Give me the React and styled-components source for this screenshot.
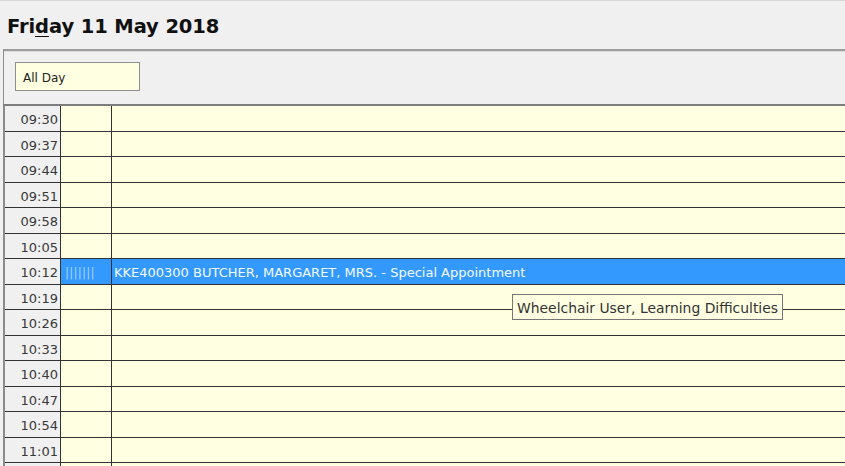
import React from "react";
import styled, { createGlobalStyle } from "styled-components";

const GlobalStyle = createGlobalStyle`
  html, body { margin: 0; padding: 0; background: #f0f0f0; }
  body { font-family: "DejaVu Sans", "Noto Sans", sans-serif; }
`;

const Page = styled.div`
  width: 845px;
  height: 466px;
  overflow: hidden;
  background: #f0f0f0;
  display: flex;
  flex-direction: column;
`;

const Header = styled.div`
  height: 49px;
  box-sizing: border-box;
  border-top: 1px solid #d6d6d6;
  padding: 14px 0 0 7px;
  flex: none;
`;

const Title = styled.h1`
  margin: 0;
  font-family: "DejaVu Sans", sans-serif;
  font-weight: bold;
  font-size: 19.5px;
  line-height: 24px;
  color: #111;
  letter-spacing: -0.1px;
  u { text-decoration-thickness: 1px; text-underline-offset: 3px; }
`;

const AllDayPanel = styled.div`
  margin-left: 3px;
  height: 55px;
  box-sizing: border-box;
  border-top: 2px solid #9d9d9d;
  border-left: 1px solid #8c8c8c;
  box-shadow: inset 0 1px 0 #dcdcdc;
  padding: 11px 0 0 11px;
  flex: none;
`;

const AllDayBox = styled.div`
  width: 125px;
  height: 29px;
  box-sizing: border-box;
  border: 1px solid #8f8f8f;
  background: #ffffe1;
  padding: 2px 0 0 7px;
  display: flex;
  align-items: center;
  font-size: 12px;
  color: #222;
`;

const Grid = styled.div`
  position: relative;
  margin-left: 3px;
  border-top: 2px solid #7d7d7d;
  border-left: 2px solid #8c8c8c;
  background: #ffffe1;
  flex: 1;
`;

const Row = styled.div`
  display: grid;
  grid-template-columns: 56px 51px 1fr;
  height: 25.5px;
  box-sizing: border-box;
  border-bottom: 1px solid #333;
  background: ${(p) => (p.$selected ? "#3399ff" : "#ffffe1")};
`;

const TimeCell = styled.div`
  background: #f0f0f0;
  border-right: 1px solid #333;
  display: flex;
  align-items: center;
  justify-content: flex-end;
  padding: 3px 2px 0 0;
  font-size: 13px;
  color: #383838;
`;

const MarkCell = styled.div`
  border-right: 1px solid #333;
  display: flex;
  align-items: center;
  padding: 3px 0 0 4px;
  font-size: 12px;
  color: #a9d1fb;
  letter-spacing: 0.2px;
  overflow: hidden;
  white-space: nowrap;
`;

const TextCell = styled.div`
  display: flex;
  align-items: center;
  padding: 3px 0 0 2px;
  font-size: 13px;
  color: #f4f9ff;
  white-space: nowrap;
  overflow: hidden;
`;

const Tooltip = styled.div`
  position: absolute;
  left: 507px;
  top: 188px;
  width: 271px;
  height: 26px;
  box-sizing: border-box;
  border: 1px solid #767676;
  background: #ffffe1;
  display: flex;
  align-items: center;
  padding: 1px 0 0 4px;
  font-size: 13.9px;
  color: #333;
  white-space: nowrap;
`;

const times = [
  "09:30", "09:37", "09:44", "09:51", "09:58", "10:05", "10:12",
  "10:19", "10:26", "10:33", "10:40", "10:47", "10:54", "11:01", "",
];

export default function App() {
  return (
    <Page>
      <GlobalStyle />
      <Header>
        <Title>
          Fri<u>d</u>ay 11 May 2018
        </Title>
      </Header>
      <AllDayPanel>
        <AllDayBox>All Day</AllDayBox>
      </AllDayPanel>
      <Grid>
        {times.map((t, i) => {
          const sel = t === "10:12";
          return (
            <Row key={i} $selected={sel}>
              <TimeCell>{t}</TimeCell>
              <MarkCell>{sel ? "|||||||" : ""}</MarkCell>
              <TextCell>
                {sel ? "KKE400300 BUTCHER, MARGARET, MRS. - Special Appointment" : ""}
              </TextCell>
            </Row>
          );
        })}
        <Tooltip>Wheelchair User, Learning Difficulties</Tooltip>
      </Grid>
    </Page>
  );
}
